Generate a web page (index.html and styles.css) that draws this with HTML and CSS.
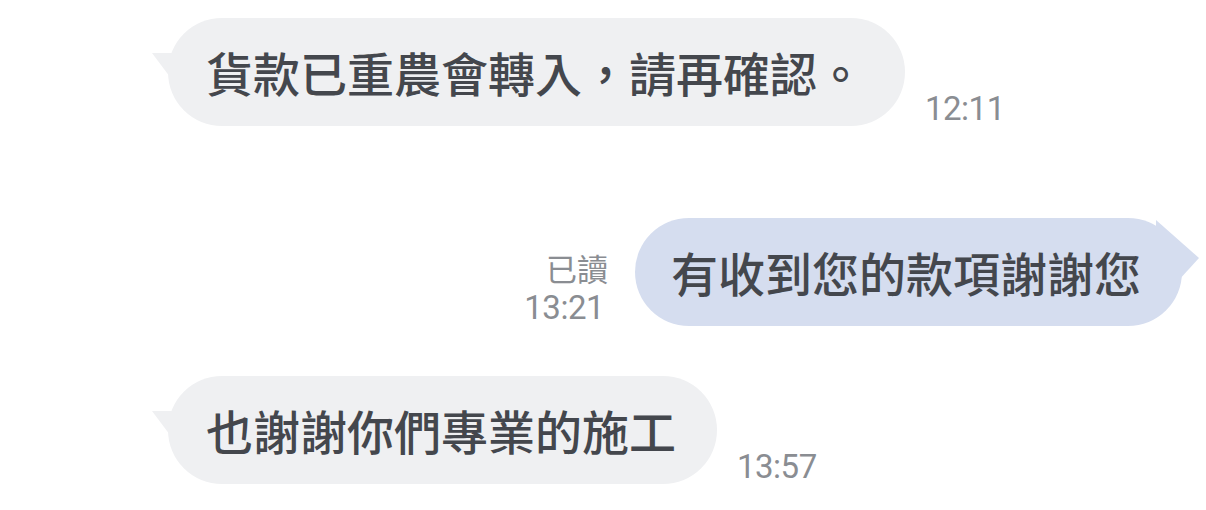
FILE: index.html
```html
<!DOCTYPE html>
<html lang="zh-Hant">
<head>
<meta charset="utf-8">
<title>Chat</title>
<link rel="stylesheet" href="styles.css">
</head>
<body>
<div class="chat">
  <div class="row row-in row-first">
    <div class="bubble bubble-in">貨款已重農會轉入，請再確認。</div>
    <div class="time">12:11</div>
  </div>
  <div class="row row-out">
    <div class="meta">
      <div class="read">已讀</div>
      <div class="time time-out">13:21</div>
    </div>
    <div class="bubble bubble-out">有收到您的款項謝謝您</div>
  </div>
  <div class="row row-in row-last">
    <div class="bubble bubble-in">也謝謝你們專業的施工</div>
    <div class="time">13:57</div>
  </div>
</div>
</body>
</html>
```
FILE: styles.css
```css
html, body {
  margin: 0;
  padding: 0;
  background: #ffffff;
}
.chat {
  width: 1206px;
  height: 510px;
  overflow: hidden;
  display: flex;
  flex-direction: column;
}
.row {
  display: flex;
  align-items: flex-end;
}
.row-in {
  padding-left: 168px;
}
.row-first {
  margin-top: 18px;
}
.row-out {
  justify-content: flex-end;
  padding-right: 24px;
  margin-top: 92px;
}
.row-last {
  margin-top: 50px;
}
.bubble {
  position: relative;
  font-family: "Noto Sans CJK TC", "Noto Sans", sans-serif;
  font-size: 47px;
  font-weight: 500;
  line-height: 60px;
  color: #44474d;
  padding: 24px 41px 24px 38px;
  border-radius: 54px;
  white-space: nowrap;
}
.bubble-in {
  background: #eff0f2;
}
.bubble-in::before {
  content: "";
  position: absolute;
  left: -16px;
  top: 35px;
  width: 30px;
  height: 22px;
  background: #eff0f2;
  clip-path: polygon(0 0, 100% 0, 100% 100%, 55% 100%);
}
.bubble-out {
  background: #d5ddef;
  padding: 24px 41px 24px 36px;
}
.bubble-out::after {
  content: "";
  position: absolute;
  right: -17px;
  top: 0;
  width: 43px;
  height: 64px;
  background: #d5ddef;
  clip-path: polygon(0 2px, 43px 40px, 22px 63px, 0 63px);
}
.time {
  font-family: Roboto, "Liberation Sans", sans-serif;
  font-size: 33px;
  line-height: 33px;
  color: #8a8d92;
  margin-left: 20px;
  margin-bottom: 1px;
  letter-spacing: -0.5px;
}
.meta {
  display: flex;
  flex-direction: column;
  align-items: flex-end;
  margin-right: 27px;
  margin-bottom: 1px;
}
.read {
  font-family: "Noto Sans CJK TC", "Noto Sans", sans-serif;
  font-size: 31px;
  line-height: 40px;
  color: #8a8d92;
}
.time-out {
  margin-left: 0;
  margin-top: 3px;
  margin-right: 4px;
}
```
